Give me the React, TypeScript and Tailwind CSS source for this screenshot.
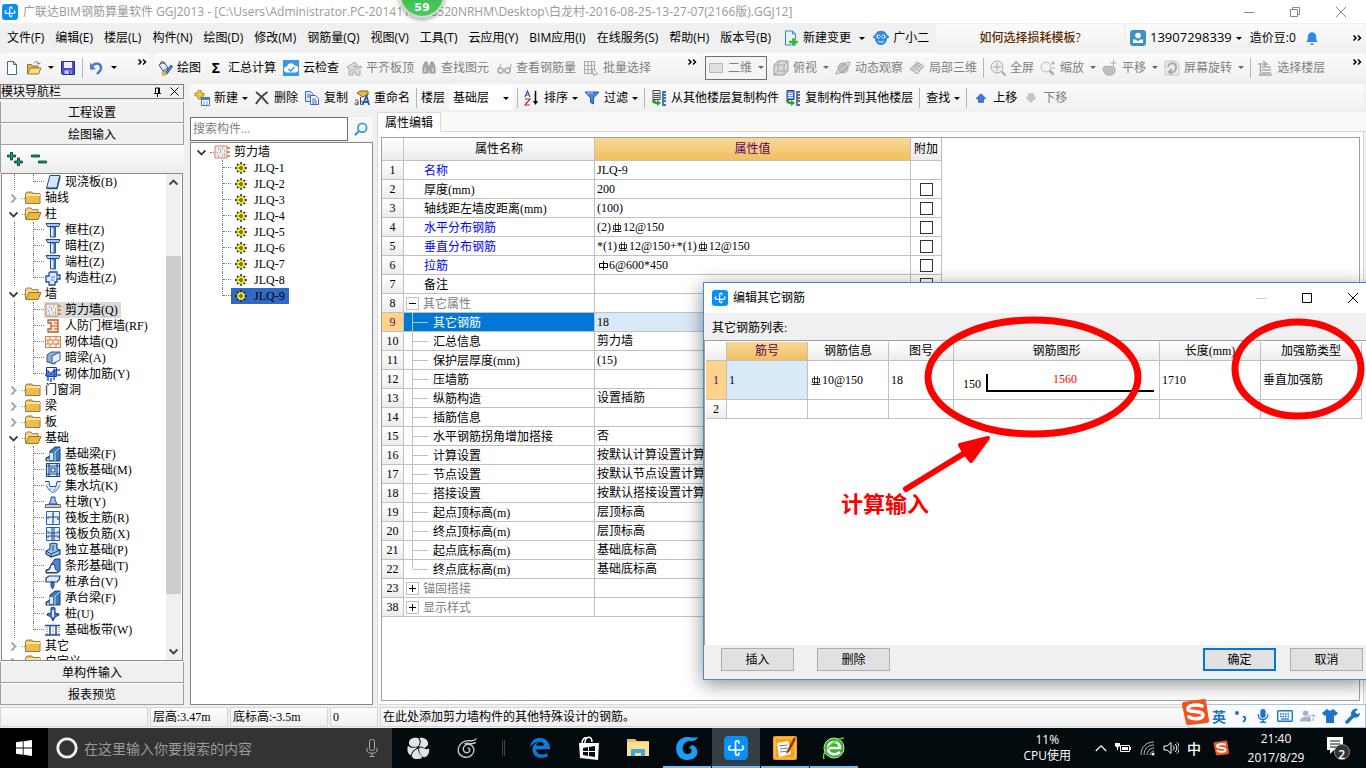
import React from "react";

type P = { children?: React.ReactNode; className?: string };

const SONG = "font-['Liberation_Serif','Noto_Sans_CJK_SC',serif]";

function Svg({ children, className = "h-4 w-4" }: P) {
  return (
    <svg viewBox="0 0 16 16" className={`shrink-0 ${className}`} fill="none" aria-hidden="true">
      {children}
    </svg>
  );
}

/* ---------- shared small pieces ---------- */

const Caret = ({ className = "text-black" }: P) => (
  <svg viewBox="0 0 6 3" className={`h-[3px] w-[6px] shrink-0 ${className}`} aria-hidden="true">
    <path d="M0 0h6L3 3z" fill="currentColor" />
  </svg>
);

const More = () => (
  <button aria-label="更多" className="flex h-3 w-[10px] shrink-0 items-center">
    <svg viewBox="0 0 9 6" className="h-[6px] w-[9px]" fill="none" stroke="#000" strokeWidth="1.500" aria-hidden="true">
      <path d="M.5.5 3 3 .5 5.500M5 .5 7.500 3 5 5.500" />
    </svg>
  </button>
);

const Sep = () => <span className="h-5 w-px shrink-0 bg-[#b4b4b4]" />;

const AppIcon = ({ className = "h-4 w-4" }: P) => (
  <svg viewBox="0 0 24 24" className={`shrink-0 ${className}`} fill="none" aria-hidden="true">
    <rect width="24" height="24" rx="4.500" fill="#0a90f5" />
    <path d="M15 7c0-3-3.500-3-3.500 0v10c0 3 3.500 3 3.500 0" stroke="#fff" strokeWidth="1.700" strokeLinecap="round" />
    <path d="M6 10c-2 1-2 4 .5 4H17c3 0 3-2.500 1.500-4" stroke="#fff" strokeWidth="1.700" strokeLinecap="round" />
  </svg>
);

/* ---------- toolbar icons ---------- */

const G = "#a9a9a9";
const GL = "#dcdcdc";
const ic = {
  page: <Svg><path d="M3.500 1.500h6l3 3v10h-9z" fill="#fff" stroke="#4a6a8c" /><path d="M9.500 1.500v3h3" stroke="#4a6a8c" /></Svg>,
  open: <Svg><path d="M1.500 14V4.500h4l1 1.500H12v2" fill="#e9b44c" stroke="#8c7440" /><path d="M1.500 14 4.500 8H15l-2.500 6z" fill="#ffdf7e" stroke="#8c7440" /><path d="M8 3c2-2 4-1.500 5 1l1.500-1M13 4l-2-.5" stroke="#6a7a8c" /></Svg>,
  save: <Svg><path d="M1.500 1.500h13v13h-12l-1-1z" fill="#4a4ed0" stroke="#2a2c90" /><path d="M4 2h8v6H4z" fill="#eef" /><path d="M4.500 10.500h7V14h-7z" fill="#c8ccf0" /><path d="M9 11h1.500v3H9z" fill="#2a2c90" /></Svg>,
  undo: <Svg><path d="M3.500 5.500c4-3.500 9-2 8.500 3-.3 3-3 4-4 5.500" stroke="#4678d8" strokeWidth="2.500" /><path d="M1 2.500v7h6z" fill="#4678d8" /></Svg>,
  bucket: <Svg><path d="m2 5 5-3 4 6-5 3z" fill="#dfe8f6" stroke="#33507c" /><path d="M4 4c-1-3 2-4 3 0" stroke="#33507c" /><path d="m8 13 6-8 1.500 1.500L10 14z" fill="#4c8ae0" stroke="#27508c" /><path d="m5 12 3-1 2 3-4 1.500z" fill="#f0b840" stroke="#a0741c" strokeWidth=".6" /></Svg>,
  cloud: <Svg><path fill="#3a96e0" d="M0 0h16v16H0z" /><path d="M4 12.500a3 3 0 0 1 0-6 4 4 0 0 1 7.500-1 3.500 3.500 0 0 1 .5 7z" fill="#fff" /><path d="m5.500 9 2 2 4-4" stroke="#3a96e0" strokeWidth="1.500" /></Svg>,
  level: <Svg><path d="m1 7 8-5 2 3-4 2 8-1v2L4 11z" fill={GL} stroke={G} /><path d="M3 11v4h4v-3h3v3h4v-5" fill={GL} stroke={G} /></Svg>,
  bino: <Svg><path d="M2 7 4 2h2l1 4h2l1-4h2l2 5v6h-5v-3H7v3H2z" fill={G} stroke="#999" /><path d="M4 8v4M12 8v4" stroke="#eee" /></Svg>,
  glasses: <Svg><circle cx="4.500" cy="10.500" r="2.500" stroke={G} strokeWidth="1.500" /><circle cx="11.500" cy="10.500" r="2.500" stroke={G} strokeWidth="1.500" /><path d="M2 10 5 4M14 10l1-6M7 10h2" stroke={G} /></Svg>,
  batch: <Svg><path d="M1.500 1.500h10v12h-10zM1.500 5.500h10M1.500 9.500h10M5 1.500v12M8.500 1.500v12" stroke={G} /><path d="m8 7 7 7-3 .5-1 1.500z" fill="#f4f4f4" stroke={G} /></Svg>,
  rect2d: <Svg><path d="M1.500 3.500h13v9h-13z" fill="#e0e0e0" stroke="#b8b8b8" /></Svg>,
  cube: <Svg><path d="m1 5 4-4h10v10l-4 4H1z" fill="#dadada" stroke="#999" /><path d="M1 5h10v10M11 5l4-4M5 1v10h10M5 11l-4 4" stroke="#aaa" /></Svg>,
  orbit: <Svg><circle cx="8" cy="8" r="5" fill="#c4c4c4" stroke={G} /><path d="M1 14c0-4 9-12 14-12 1 3-7 11-14 12z" stroke="#999" /></Svg>,
  part3d: <Svg><path d="m1 9 7-7 7 4-7 8z" fill={GL} stroke={G} /><path d="m4 6 7 5M6 4l7 4M5 11l7-7M3 10l7-7" stroke={G} /></Svg>,
  full: <Svg><circle cx="7" cy="7" r="6" fill="#eee" stroke={G} /><path d="M7 3v8M3 7h8" stroke={G} /><path d="m11.500 11.500 4 4" stroke={G} strokeWidth="2" /></Svg>,
  zoom: <Svg><circle cx="6" cy="7" r="5" fill="#f4f4f4" stroke="#b8b8b8" /><path d="m9.500 10.500 4 4" stroke={G} strokeWidth="2.500" /><path d="M11 3h4M13 1v4M12 8h3" stroke={G} /></Svg>,
  pan: <Svg><path d="M1 8c1-2 3-2 4-1 1-1 2-1 3 0 1-1 2-1 3 0 2 0 2 1 2 3s-1 5-4 5H5c-2-1-4-4-4-7z" fill="#c0c0c0" stroke={G} /><path d="M11.500 0v6M8.500 3h6" stroke={G} /></Svg>,
  rotate: <Svg><path d="M1 1h11l3 3v11H1z" fill="#ececec" stroke="#c4c4c4" /><path d="M4 7c1-5 8-5 8 0s-3 6-6 5" stroke={G} strokeWidth="2" /><path d="M8 8v7l-5-3z" fill={G} /></Svg>,
  floor: <Svg><path d="M1 4h9L6 1M10 4 7 6" stroke={G} strokeWidth="1.500" /><path d="M5 7h9M5 10h9M5 13h9M2 15h13M3.500 5v10" stroke={G} strokeWidth="1.500" /></Svg>,
  add: <Svg><path d="M4 0h3v3h3v3H7v3H4V6H1V3h3z" fill="#f2c83c" stroke="#a07a14" strokeWidth=".8" /><path d="M7.500 7.500h8v8h-8z" fill="#fff" stroke="#4474b4" /><path d="M8 8h7v2H8z" fill="#4a82d4" /><path d="M9 12h2M12 12h2M9 14h2M12 14h2" stroke="#6f9fe0" /></Svg>,
  del: <Svg><path d="M2 2c4 3 8 7 12 12M13.500 2C9 5 5 9 2 14" stroke="#444" strokeWidth="2" /></Svg>,
  copy: <Svg><path d="M1.500 1.500h5l3 3v7h-8z" fill="#dce8fa" stroke="#3c68b4" /><path d="M6.500 5.500h5l3 3v6h-8z" fill="#fff" stroke="#3c68b4" /><path d="M3 5h4M3 7h3M8 9h4M8 11h5M8 13h5" stroke="#3c68b4" /></Svg>,
  rename: <Svg><path d="m3 3 3-2h8v4l-6 2-2-2z" fill="#e8b848" stroke="#8c6418" /><path d="M1 10.500c2-1.500 3-.5 3 1v3c-4 1-4-2 0-2M6.500 7v7.500c4 0 3-4 0-3" stroke="#444" /><path d="m8.500 15 4-9 2.500 9M9.500 12h4" stroke="#2858c0" strokeWidth="1.800" /></Svg>,
  sort: <Svg><path d="M1 7 3.500 1 6 7M2 5h3" stroke="#2858b0" strokeWidth="1.200" /><path d="M1 9h5l-5 6h5" stroke="#b03030" strokeWidth="1.200" /><path d="M11.500 1v12" stroke="#000" strokeWidth="1.500" /><path d="M9 11h5l-2.500 4z" fill="#000" /></Svg>,
  filter: <Svg><path d="M1 2h14l-5.500 6v6l-3-1.500V8z" fill="#4a84e4" stroke="#2a54a8" /><path d="M3 3h6" stroke="#b8d4fa" /></Svg>,
  from: <Svg><path d="M2 .5h7v9H2z" fill="#eee" stroke="#444" /><path d="M3 3.500h5M3 5.500h5M3 7.500h5" stroke="#444" /><path d="M1 10h3l1 2h1v-2l4 3-4 3v-2c-3 0-5-1-5-4z" fill="#28a428" /><path d="M15 2h-3v13h3M12 5h3M12 8h3M12 11h3" stroke="#3c70bc" strokeWidth="1.800" /></Svg>,
  to: <Svg><path d="M2 .5h7v9H2z" fill="#6a94e0" stroke="#24407c" /><path d="M3 3.500h5M3 5.500h5M3 7.500h5" stroke="#fff" /><path d="M1 10h3l1 2h1v-2l4 3-4 3v-2c-3 0-5-1-5-4z" fill="#28a428" /><path d="M15 2h-3v13h3M12 5h3M12 8h3M12 11h3" stroke="#5c6c84" strokeWidth="1.800" /></Svg>,
  up: <Svg className="h-4 w-[10px]"><path d="M8 1 0 9h4v6h8V9h4z" fill="#3a78e0" stroke="#2450a0" /></Svg>,
  down: <Svg className="h-4 w-[10px]"><path d="m8 15 8-8h-4V1H4v6H0z" fill="#c8c8c8" stroke="#aaa" /></Svg>,
  change: <Svg><path d="M2.500 1h7l3 3v11h-10z" fill="#e4f2fc" stroke="#3a84bc" /><path d="M9.500 1v3h3" stroke="#3a84bc" /><path d="M9 8h3v2.500h3v3h-3V16H9v-2.500H6v-3h3z" fill="#34b428" stroke="#fff" strokeWidth=".4" /></Svg>,
  bird: <Svg><path d="M3 3c2-3 8-3 10 0l1 2c1 0 2 1 2 3-1 0-2 0-2 1-1 8-11 8-12 0 0-1-1-1-2-1 0-2 1-3 2-3z" fill="#2c8ce0" /><circle cx="5.500" cy="6.500" r="2" fill="#fff" /><circle cx="10.500" cy="6.500" r="2" fill="#fff" /><circle cx="5.800" cy="6.500" r=".9" fill="#124" /><circle cx="10.200" cy="6.500" r=".9" fill="#124" /><path d="M5 11c2 1.500 4 1.500 6 0" stroke="#fff" /></Svg>,
  user: <Svg><rect width="16" height="16" rx="3" fill="#3b93c8" /><circle cx="8" cy="5.500" r="2.800" fill="#fff" /><path d="M3 13V9.500h3l2 2 2-2h3V13z" fill="#fff" /></Svg>,
  bell: <Svg><path d="M2 12c2-1 1.500-3 2-6 .4-5 7.600-5 8 0 .5 3 0 5 2 6z" fill="#2a8cf0" /><path d="M6 13.500c1 2 3 2 4 0z" fill="#2a8cf0" /></Svg>,
};

function Tool({ icon, label, caret, off }: { icon?: React.ReactNode; label: string; caret?: boolean; off?: boolean }) {
  return (
    <button className={`flex h-6 shrink-0 items-center gap-1 whitespace-nowrap ${off ? "text-[#808080]" : "text-black"}`}>
      {icon}
      <span>{label}</span>
      {caret && <Caret className={off ? "ml-[2px] text-[#666]" : "text-black"} />}
    </button>
  );
}

/* ---------- module tree icons ---------- */

const B = "#1c4c9c";
const L = "#a8c8f4";
const FolderClosed = () => <Svg><path d="M.5 3.500 2 2h5l1 1.500h7v10H.5z" fill="#f0bc48" stroke="#9c7c3c" /><path d="M1 5h14" stroke="#fbe8a8" strokeWidth="2" /></Svg>;
const FolderOpen = () => <Svg><path d="M.5 13V3L2 2h4l1 1.500h6V6" fill="#f4d890" stroke="#a08448" /><path d="M1 13.500 4 6.500h12l-3 7z" fill="#f0b840" stroke="#9c7428" /></Svg>;

const treeIcons: Record<string, React.ReactNode> = {
  slab: <Svg><path d="M5 1.500h10L12 14H1.500z" fill="#d8e8fc" stroke={B} /><path d="M1.500 14.500H12l3-12" stroke={B} strokeWidth="1.500" /></Svg>,
  column: <Svg><path d="M1 1.500h14l-1.500 3h-11z" fill={L} stroke={B} /><path d="M5.500 5h5v10h-5z" fill="#e4effc" stroke={B} /><path d="M9.500 5v10" stroke="#3a70c8" strokeWidth="2" /></Svg>,
  tie: <Svg><path d="M5 2h7v3h3v4h-3v3h-2v3H4v-3H1V6h3V3z" fill="#dce9fb" stroke={B} strokeWidth="1.300" /><path d="M12 2v10M6 7h4M6 10h3" stroke="#4a7cd0" /></Svg>,
  wall: <Svg><path d="M1 2h12v12H1z" fill="#ececec" stroke="#d08860" /><path d="M4 5h1M8 4h1M10 7h1M3 9h1M6 8h1M8 11h1M4 12h1M10 12h1M6 6h1M10 10h1" stroke="#777" /><path d="M13 4h3M13 8h3M13 12h3" stroke="#d07830" strokeWidth="1.500" /></Svg>,
  door: <Svg><path d="M3 2h10v12H3v-3h3V5H3z" fill="#fbe4d0" stroke="#b85c28" strokeWidth="1.300" /><path d="M6 8h7M9 5h4M9 11h4" stroke="#b85c28" /></Svg>,
  brick: <Svg><path d="M.5 2.500h15v11H.5zM.5 6h15M.5 10h15M5 2v4M11 2v4M8 6v4M3 6v4M13 6v4M5 10v4M11 10v4" fill="#fff4ea" stroke="#d48454" strokeWidth="1.100" /></Svg>,
  beam: <Svg><path d="m2 5 4-3h9l-5 3v9l-8-2z" fill="#8cacd8" stroke="#3a5c8c" /><path d="m7 6 8-4v8l-8 4z" fill="#e4eefa" stroke="#3a5c8c" /></Svg>,
  rebar: <Svg><path d="M1.500 1.500h10v9h-10z" stroke="#1830b0" /><path d="M3 15V5l3 3 3-4v10M0 9h16M6 12v4M15 4h-5v5" stroke="#2858c0" strokeWidth="1.500" /></Svg>,
  fbeam: <Svg><path d="M1 15v-3l4-2V5l5-4h5v14z" fill="#3a78bc" stroke="#16407c" /><path d="M5 7h3v7H5zM2 13h2v1.500H2z" fill="#dceafa" /><path d="M10 15V6l5-4" stroke="#bcd8f4" /></Svg>,
  raft: <Svg><path d="M1.500 1.500h13v13h-13zM4 1v14M12 1v14M1 4h14M1 12h14M6 6h4v4H6z" fill="#dceafa" stroke="#16508c" strokeWidth="1.200" /></Svg>,
  pit: <Svg><path d="M0 4h4l1 5h6l1-5h4l-3 8-5 3-5-3z" fill="#dceafa" /><path d="M0 3.500h4l1 5h6l1-5h4" stroke={B} /><path d="m1 7 3 5 4 3 4-3 3-5M5 11h1M8 12h2M10 10h1" stroke="#4a80d0" /></Svg>,
  pier: <Svg><path d="M.5 10.500h15v3H.5z" fill="#ccc" stroke="#666" /><path d="m4 10 2-4V3h4v3l2 4z" fill={L} stroke={B} /></Svg>,
  raftMain: <Svg><path d="M1.500 1.500h13v13h-13z" fill="#eaf2fd" stroke="#2c60b8" /><path d="M9 3H8v10H7M3 9V7h10v3" stroke={B} strokeWidth="1.200" /></Svg>,
  raftNeg: <Svg><path d="M1.500 1.500h13v13h-13z" fill="#eaf2fd" stroke="#2c60b8" /><path d="M7 1v14M9 1v14M3 5v2h10V5M3 12v-2h10v2" stroke={B} strokeWidth="1.100" /></Svg>,
  iso: <Svg><path d="m1 9 4-2V2l4-1 3 1v5l3 1v4l-9 3-5-3z" fill="#9cc4ec" stroke="#16487c" strokeWidth="1.200" /><path d="m1 9 5 3 9-4M6 12v3M8 3v6" stroke="#16487c" /></Svg>,
  strip: <Svg><path d="M1 15v-3l3-1 3-6 3-4h5v12l-3 2z" fill="#4c88c8" stroke="#16407c" /><path d="M1.500 14.500v-2l3-1 2-5h3l1 5 2 1v2z" fill="#f2f8fe" stroke="#16407c" /></Svg>,
  cap: <Svg><path d="m1 4 3-2h11l-1 4-2 2H1z" fill="#dceafa" stroke="#16407c" strokeWidth="1.200" /><path d="M6 8h3v4l-1.500 3L6 12z" fill="#3a78bc" stroke="#16407c" /></Svg>,
  pile: <Svg><path d="M6 5V2l2-1 2 1v5l4 1v1l-4 2-2 4-2-4-4-2V8l4-1z" fill="#3a78c8" stroke="#16407c" /><path d="M7 4h2v7H7z" fill="#dceafa" /></Svg>,
  band: <Svg><path d="M0 3.500h15M0 13h15M5 3v10M11 3v10" stroke={B} strokeWidth="1.500" /><path d="M2 5v7M8 5v7M14 5v7" stroke="#666" strokeDasharray="1 1" /></Svg>,
};

type Node = { t: string; i?: string; open?: boolean; last?: boolean; sel?: boolean };
const nodes: Node[] = [
  { t: "现浇板(B)", i: "slab", last: true },
  { t: "轴线" },
  { t: "柱", open: true },
  { t: "框柱(Z)", i: "column" },
  { t: "暗柱(Z)", i: "column" },
  { t: "端柱(Z)", i: "column" },
  { t: "构造柱(Z)", i: "tie", last: true },
  { t: "墙", open: true },
  { t: "剪力墙(Q)", i: "wall", sel: true },
  { t: "人防门框墙(RF)", i: "door" },
  { t: "砌体墙(Q)", i: "brick" },
  { t: "暗梁(A)", i: "beam" },
  { t: "砌体加筋(Y)", i: "rebar", last: true },
  { t: "门窗洞" },
  { t: "梁" },
  { t: "板" },
  { t: "基础", open: true },
  { t: "基础梁(F)", i: "fbeam" },
  { t: "筏板基础(M)", i: "raft" },
  { t: "集水坑(K)", i: "pit" },
  { t: "柱墩(Y)", i: "pier" },
  { t: "筏板主筋(R)", i: "raftMain" },
  { t: "筏板负筋(X)", i: "raftNeg" },
  { t: "独立基础(P)", i: "iso" },
  { t: "条形基础(T)", i: "strip" },
  { t: "桩承台(V)", i: "cap" },
  { t: "承台梁(F)", i: "fbeam" },
  { t: "桩(U)", i: "pile" },
  { t: "基础板带(W)", i: "band", last: true },
  { t: "其它" },
  { t: "自定义" },
];

const Chevron = ({ open, className = "" }: { open?: boolean; className?: string }) => (
  <svg viewBox="0 0 9 9" className={`h-[9px] w-[9px] shrink-0 ${className}`} fill="none" strokeWidth="1.800" aria-hidden="true">
    {open ? <path d="M.5 2.500l4 4 4-4" stroke="#404040" /> : <path d="M2.500.5l4 4-4 4" stroke="#a0a0a0" />}
  </svg>
);

const Branch = ({ last, className = "w-[11px]" }: { last?: boolean; className?: string }) => (
  <span className={`flex h-4 shrink-0 items-start ${className}`}>
    <span className={`w-px border-l border-dotted border-[#808080] ${last ? "h-2" : "h-4"}`} />
    <span className="h-2 flex-1 border-b border-dotted border-[#808080]" />
  </span>
);

function TreeRow({ n }: { n: Node }) {
  if (n.i)
    return (
      <li className="flex h-4 items-center pl-3">
        <span className="h-4 w-[19px] shrink-0 border-l border-dotted border-[#808080]" />
        <Branch last={n.last} />
        <span className={`px-px ${n.sel ? "bg-[#d9d9d9]" : ""}`}>{treeIcons[n.i]}</span>
        <span className={`whitespace-nowrap px-[3px] ${n.sel ? "bg-[#d9d9d9]" : ""}`}>{n.t}</span>
      </li>
    );
  return (
    <li className="flex h-4 items-center pl-[7px]">
      <Chevron open={n.open} />
      <span className="ml-1 w-[3px] shrink-0 border-b border-dotted border-[#808080]" />
      {n.open ? <FolderOpen /> : <FolderClosed />}
      <span className="whitespace-nowrap pl-1">{n.t}</span>
    </li>
  );
}

const NavButton = ({ children }: P) => (
  <button className="h-[22px] w-full shrink-0 border border-[#a0a0a0] border-t-white bg-[#f0f0f0] text-center leading-[22px]">{children}</button>
);

function ModuleNav() {
  return (
    <aside className="flex w-[184px] shrink-0 flex-col">
      <div className="flex h-[15px] shrink-0 items-center border border-[#808080] leading-3">
        <span className="flex-1">模块导航栏</span>
        <button aria-label="固定" className="mr-2 flex">
          <svg viewBox="0 0 9 10" className="h-[10px] w-[9px]" fill="none" stroke="#000" aria-hidden="true"><path d="M2.500 6V1h4v5M1 6.500h7M4.500 6v4M5.500 1v5" /></svg>
        </button>
        <button aria-label="关闭" className="mr-1 flex">
          <svg viewBox="0 0 9 9" className="h-[9px] w-[9px]" stroke="#000" aria-hidden="true"><path d="m.5.5 8 8M8.500.5l-8 8" /></svg>
        </button>
      </div>
      <div className="h-[2px] shrink-0" />
      <NavButton>工程设置</NavButton>
      <NavButton>绘图输入</NavButton>
      <div className="flex h-[28px] shrink-0 items-center gap-2 border-l border-[#a0a0a0] bg-linear-to-b from-white to-[#ececec] pl-[6px]">
        <button aria-label="展开全部" className="flex">
          <svg viewBox="0 0 16 14" className="h-[14px] w-4" aria-hidden="true"><path d="M3.500 0h2v3h3v2h-3v3h-2V5H.500V3h3zM10.500 6h2v3h3v2h-3v3h-2v-3h-3V9h3z" fill="#10a080" stroke="#033" strokeWidth=".8" /></svg>
        </button>
        <button aria-label="折叠全部" className="flex">
          <svg viewBox="0 0 16 14" className="h-[14px] w-4" aria-hidden="true"><path d="M.500 3h8v2h-8zM7.500 9h8v2h-8z" fill="#10a080" stroke="#033" strokeWidth=".8" /></svg>
        </button>
      </div>
      <div className="mx-px flex min-h-0 flex-1 border border-[#828790] bg-white">
        <ul className="min-w-0 flex-1 overflow-hidden leading-4">
          {nodes.map((n, i) => <TreeRow key={i} n={n} />)}
        </ul>
        <div className="mr-px flex w-[15px] shrink-0 flex-col items-center bg-[#f0f0f0]">
          <Chevron open className="my-1 rotate-180" />
          <div className="mt-[65px] w-full flex-[330] bg-[#cdcdcd]" />
          <div className="flex-[48]" />
          <Chevron open className="my-1" />
        </div>
      </div>
      <NavButton>单构件输入</NavButton>
      <NavButton>报表预览</NavButton>
    </aside>
  );
}

/* ---------- component list ---------- */

const Gear = () => (
  <Svg className="h-3 w-3">
    <path d="M8 0v16M0 8h16M2.500 2.500l11 11M13.500 2.500l-11 11" stroke="#111" strokeWidth="1.800" />
    <circle cx="8" cy="8" r="5.500" fill="#ffee20" stroke="#554" strokeWidth=".8" />
    <circle cx="8" cy="8" r="1.800" fill="#ffee20" stroke="#222" strokeWidth="1.300" />
  </Svg>
);

function ComponentList() {
  return (
    <section className="flex w-[183px] shrink-0 flex-col">
      <div className="flex h-[30px] shrink-0 items-center pt-1">
        <input aria-label="搜索构件" placeholder="搜索构件..." className="h-6 w-[158px] border border-[#707070] bg-white px-[2px] placeholder:text-[#808080]" />
        <button aria-label="搜索" className="flex h-6 flex-1 items-center justify-center bg-[#f8f8f8]">
          <Svg className="h-[14px] w-[14px]"><circle cx="9.500" cy="6.500" r="5" stroke="#3a9ad8" strokeWidth="2" /><path d="M6 10 1 15" stroke="#3a9ad8" strokeWidth="2.500" /></Svg>
        </button>
      </div>
      <div className="min-h-0 flex-1 border border-[#828790] bg-white pt-px">
        <div className="flex h-4 items-center pl-[6px] leading-4">
          <Chevron open />
          <span className="ml-1 w-1 border-b border-dotted border-[#808080]" />
          {treeIcons.wall}
          <span className="pl-1">剪力墙</span>
        </div>
        <ul className="pl-[31px]">
          {[1, 2, 3, 4, 5, 6, 7, 8, 9].map((k) => (
            <li key={k} className="flex h-4 items-center leading-4">
              <Branch last={k === 9} className="w-[9px]" />
              <span className={`flex h-4 items-center gap-[7px] px-1 ${k === 9 ? "bg-[#316ac5]" : ""}`}>
                <Gear />
                <span>JLQ-{k}</span>
              </span>
            </li>
          ))}
        </ul>
      </div>
    </section>
  );
}

/* ---------- property table ---------- */

const Hrb = () => (
  <svg viewBox="0 0 10 9" className="mx-px inline h-[9px] w-[10px] align-[-1px]" fill="none" stroke="#000" aria-label="HRB400" role="img">
    <path d="M1.500 2.500h7v4h-7zM3.500 0v8M6.500 0v8M.5 8.500h9" strokeWidth=".8" />
  </svg>
);
const Hpb = () => (
  <svg viewBox="0 0 10 9" className="mx-px inline h-[9px] w-[10px] align-[-1px]" fill="none" stroke="#000" aria-label="HPB300" role="img">
    <path d="M1.500 2.500h8v4h-8zM5.500 0v9" />
  </svg>
);

type Row = { n: number; name: string; v?: React.ReactNode; kind?: "blue" | "group" | "child"; open?: boolean };
const rows: Row[] = [
  { n: 1, name: "名称", v: "JLQ-9", kind: "blue" },
  { n: 2, name: "厚度(mm)", v: "200" },
  { n: 3, name: "轴线距左墙皮距离(mm)", v: "(100)" },
  { n: 4, name: "水平分布钢筋", v: <>(2)<Hrb />12@150</>, kind: "blue" },
  { n: 5, name: "垂直分布钢筋", v: <>*(1)<Hrb />12@150+*(1)<Hrb />12@150</>, kind: "blue" },
  { n: 6, name: "拉筋", v: <><Hpb />6@600*450</>, kind: "blue" },
  { n: 7, name: "备注" },
  { n: 8, name: "其它属性", kind: "group", open: true },
  { n: 9, name: "其它钢筋", v: "18", kind: "child" },
  { n: 10, name: "汇总信息", v: "剪力墙", kind: "child" },
  { n: 11, name: "保护层厚度(mm)", v: "(15)", kind: "child" },
  { n: 12, name: "压墙筋", kind: "child" },
  { n: 13, name: "纵筋构造", v: "设置插筋", kind: "child" },
  { n: 14, name: "插筋信息", kind: "child" },
  { n: 15, name: "水平钢筋拐角增加搭接", v: "否", kind: "child" },
  { n: 16, name: "计算设置", v: "按默认计算设置计算", kind: "child" },
  { n: 17, name: "节点设置", v: "按默认节点设置计算", kind: "child" },
  { n: 18, name: "搭接设置", v: "按默认搭接设置计算", kind: "child" },
  { n: 19, name: "起点顶标高(m)", v: "层顶标高", kind: "child" },
  { n: 20, name: "终点顶标高(m)", v: "层顶标高", kind: "child" },
  { n: 21, name: "起点底标高(m)", v: "基础底标高", kind: "child" },
  { n: 22, name: "终点底标高(m)", v: "基础底标高", kind: "child" },
  { n: 23, name: "锚固搭接", kind: "group" },
  { n: 38, name: "显示样式", kind: "group" },
];

const CELL = "border-b border-r border-[#c0c0c0] p-0 font-normal";
const HEAD = "bg-linear-to-b from-white to-[#ececec]";
const GOLD = "bg-linear-to-b from-[#f8d898] to-[#f0c060] text-[#600060]";

function PropertyTable() {
  return (
    <table className="w-[560px] table-fixed border-separate border-spacing-0 leading-[18px]">
      <colgroup>
        <col className="w-[22px]" />
        <col className="w-[191px]" />
        <col className="w-[316px]" />
        <col className="w-[31px]" />
      </colgroup>
      <thead>
        <tr className="h-[23px]">
          <th className={`${CELL} ${HEAD}`} />
          <th className={`${CELL} ${HEAD}`}>属性名称</th>
          <th className={`${CELL} ${GOLD}`}>属性值</th>
          <th className={`${CELL} ${HEAD} whitespace-nowrap`}>附加</th>
        </tr>
      </thead>
      <tbody>
        {rows.map((r) => {
          const sel = r.n === 9;
          return (
            <tr key={r.n} className="h-[19px]">
              <th scope="row" className={`${CELL} ${sel ? "bg-[#ffd38c] text-[#600060]" : HEAD}`}>{r.n}</th>
              <td className={`${CELL} ${sel ? "bg-[#0078d7] text-white" : ""}`}>
                {r.kind === "child" ? (
                  <span className="flex h-[18px] items-center pl-2">
                    <span className="flex h-[18px] w-4 items-start">
                      <span className={`border-l border-[#c0c0c0] ${r.n === 22 ? "h-[9px]" : "h-[19px]"}`} />
                      <span className="h-[10px] flex-1 border-b border-[#c0c0c0]" />
                    </span>
                    <span className="pl-[5px] pt-px">{r.name}</span>
                  </span>
                ) : r.kind === "group" ? (
                  <span className="flex h-[18px] items-center gap-1 pl-[2px] text-[#808080]">
                    <button aria-label={r.open ? "折叠" : "展开"} className="flex h-[13px] w-[13px] items-center justify-center border border-[#c0c0c0] bg-white">
                      <svg viewBox="0 0 7 7" className="h-[7px] w-[7px]" stroke="#000" aria-hidden="true"><path d={r.open ? "M0 3.500h7" : "M0 3.500h7M3.500 0v7"} /></svg>
                    </button>
                    <span className="pt-px">{r.name}</span>
                  </span>
                ) : (
                  <span className={`flex h-[18px] items-center pl-5 pt-px ${r.kind === "blue" ? "text-[#0000ff]" : ""}`}>{r.name}</span>
                )}
              </td>
              <td className={`${CELL} whitespace-nowrap pl-[2px] ${sel ? "bg-[#d8e9f8]" : ""}`}>{r.v}</td>
              <td className={CELL}>
                {r.n > 1 && r.kind !== "group" && (
                  <input type="checkbox" aria-label={`附加 ${r.name}`} className="mx-auto block h-[13px] w-[13px] appearance-none border border-[#333] bg-white" />
                )}
              </td>
            </tr>
          );
        })}
      </tbody>
    </table>
  );
}

/* ---------- dialog ---------- */

const DlgButton = ({ children, className = "border border-[#adadad]" }: P) => (
  <button className={`h-[23px] w-[73px] bg-[#e1e1e1] text-center leading-5 ${className}`}>{children}</button>
);

function RebarDialog() {
  return (
    <div role="dialog" aria-label="编辑其它钢筋" className="absolute left-[703px] right-0 top-[282px] flex flex-col border border-r-0 border-[#3c8edc] bg-[#f0f0f0] shadow-[0_4px_18px_rgba(0,0,0,0.45)]">
      <header className="flex h-[30px] items-center bg-white pl-2 font-['Open_Sans','Noto_Sans_CJK_SC',sans-serif]">
        <AppIcon />
        <h2 className="flex-1 pl-[5px]">编辑其它钢筋</h2>
        <div className="flex items-center gap-9 pr-2">
          <button aria-label="最小化"><svg viewBox="0 0 10 10" className="h-[10px] w-[10px]" stroke="#ccc" aria-hidden="true"><path d="M0 5.500h10" /></svg></button>
          <button aria-label="最大化"><svg viewBox="0 0 10 10" className="h-[10px] w-[10px]" fill="none" stroke="#000" aria-hidden="true"><path d="M.5.5h9v9h-9z" /></svg></button>
          <button aria-label="关闭"><svg viewBox="0 0 10 10" className="h-[10px] w-[10px]" stroke="#000" aria-hidden="true"><path d="m0 0 10 10M10 0 0 10" /></svg></button>
        </div>
      </header>
      <p className="h-[27px] pl-2 leading-[30px]">其它钢筋列表:</p>
      <div className="h-[305px] border-l border-t border-[#a0a0a8] bg-white pl-px pt-px">
        <table className="w-[656px] table-fixed border-separate border-spacing-0 leading-[18px]">
          <colgroup>
            <col className="w-[21px]" />
            <col className="w-[81px]" />
            <col className="w-[81px]" />
            <col className="w-[65px]" />
            <col className="w-[206px]" />
            <col className="w-[101px]" />
            <col className="w-[101px]" />
          </colgroup>
          <thead>
            <tr className="h-[19px]">
              <th className={`${CELL} ${HEAD}`} />
              <th className={`${CELL} ${GOLD}`}>筋号</th>
              <th className={`${CELL} ${HEAD}`}>钢筋信息</th>
              <th className={`${CELL} ${HEAD}`}>图号</th>
              <th className={`${CELL} ${HEAD}`}>钢筋图形</th>
              <th className={`${CELL} ${HEAD}`}>长度(mm)</th>
              <th className={`${CELL} ${HEAD}`}>加强筋类型</th>
            </tr>
          </thead>
          <tbody>
            <tr className="h-[39px]">
              <th scope="row" className={`${CELL} bg-[#ffd38c] text-[#600060]`}>1</th>
              <td className={`${CELL} bg-[#d8e9f8] pl-[2px]`}>1</td>
              <td className={`${CELL} pl-[2px]`}><Hrb />10@150</td>
              <td className={`${CELL} pl-[2px]`}>18</td>
              <td className={CELL}>
                <div className="flex h-6 items-end pl-[9px] pr-[5px]">
                  <span className="leading-4">150</span>
                  <span className="ml-[5px] h-[18px] flex-1 border-b-2 border-l-2 border-black pr-3 text-center leading-[10px] text-[#f00]">1560</span>
                </div>
              </td>
              <td className={`${CELL} pl-[2px]`}>1710</td>
              <td className={`${CELL} pl-[2px]`}>垂直加强筋</td>
            </tr>
            <tr className="h-[19px]">
              <th scope="row" className={`${CELL} ${HEAD}`}>2</th>
              {[0, 1, 2, 3, 4, 5].map((k) => <td key={k} className={CELL} />)}
            </tr>
          </tbody>
        </table>
      </div>
      <footer className="flex h-[34px] items-start gap-[23px] pl-[17px] pr-[3px] pt-[3px]">
        <DlgButton>插入</DlgButton>
        <DlgButton>删除</DlgButton>
        <span className="flex-1" />
        <div className="flex gap-[14px]">
          <DlgButton className="border-2 border-[#0078d7]">确定</DlgButton>
          <DlgButton>取消</DlgButton>
        </div>
      </footer>
      <svg viewBox="0 0 662 240" className="pointer-events-none absolute left-0 top-0 h-[240px] w-[662px]" fill="none" stroke="#f00" strokeWidth="7" aria-hidden="true">
        <ellipse cx="329" cy="94" rx="105" ry="57" />
        <ellipse cx="594" cy="86" rx="63" ry="47" />
        <path d="m202 206 62-38" strokeWidth="6" strokeLinecap="round" />
        <path d="m284 155-28 7 4 7 7 9z" fill="#f00" strokeWidth="4" strokeLinejoin="round" />
      </svg>
      <span className="absolute left-[137px] top-[208px] text-[22px] font-bold leading-7 text-[#f00]">计算输入</span>
    </div>
  );
}

/* ---------- taskbar ---------- */

const Sogou = ({ className = "h-4 w-4" }: P) => (
  <svg viewBox="0 0 28 28" className={`shrink-0 ${className}`} fill="none" aria-hidden="true">
    <path d="M2 4 23 1q2 0 2 2l3 19q0 3-2 3L8 27q-3 0-3-2L1 7q0-3 1-3z" fill="#f4511e" />
    <path d="M21 8c-5-2-14-1-14 3 0 4 15 1 15 6 0 4-9 5-14 2" stroke="#fff" strokeWidth="3.600" strokeLinecap="round" />
  </svg>
);

const Slot = ({ children, className = "", label }: P & { label: string }) => (
  <button aria-label={label} className={`flex h-10 w-12 shrink-0 items-center justify-center ${className}`}>{children}</button>
);
const RUN = "border-b-2 border-[#76b9ed] pt-[2px]";

function ImeBar() {
  return (
    <div className="absolute bottom-10 right-0 flex h-6 items-center gap-[7px] border border-[#a8c4dc] bg-[#fafcff] pr-1 text-[#1c74c8]">
      <Sogou className="-ml-2 -mt-2 h-7 w-7" />
      <b className="-ml-1 font-['Noto_Sans_CJK_SC',sans-serif] text-[14px]">英</b>
      <Svg><circle cx="4" cy="5" r="2" fill="#1c74c8" /><path d="M10 9c3-1 3 3 0 5" stroke="#1c74c8" strokeWidth="2" /></Svg>
      <Svg className="h-4 w-[14px]"><rect x="5" y="0" width="6" height="10" rx="3" fill="#1c74c8" /><path d="M2.500 6c0 8 11 8 11 0M8 12v4M4.500 15.200h7" stroke="#1c74c8" strokeWidth="1.600" /></Svg>
      <Svg><rect x=".7" y="2.700" width="14.600" height="10.600" rx="1" stroke="#1c74c8" strokeWidth="1.400" /><path d="M3 6h10M3 8.500h10" stroke="#1c74c8" strokeWidth="1.500" strokeDasharray="1.500 1" /><path d="M4 11h8" stroke="#1c74c8" strokeWidth="1.300" /></Svg>
      <span className="flex items-end text-[#a8b4cc]">
        <Svg className="h-[14px] w-[11px]"><circle cx="8" cy="4" r="4" fill="#a8b4cc" /><path d="M0 16c0-9 16-9 16 0z" fill="#a8b4cc" /></Svg>
        <b className="-ml-1 text-[8px] leading-[8px] text-[#8c9cb8]">17</b>
      </span>
      <Svg><path d="m5 1 3 2 3-2 5 4-2.500 3L12 7v8H4V7L2.500 8 0 5z" fill="#1c74c8" /></Svg>
      <Svg><path d="M2 14 9 7" stroke="#1c74c8" strokeWidth="3.500" strokeLinecap="round" /><path d="M15 5c0 6-8 6-9 1 0-4 4-6 7-5l-3 3 2 2z" fill="#1c74c8" /></Svg>
    </div>
  );
}

function Taskbar() {
  return (
    <footer className="flex h-10 shrink-0 items-center bg-[#020a0e] font-['Open_Sans','Noto_Sans_CJK_SC',sans-serif] text-[12px] text-white">
      <Slot label="开始" className="bg-black">
        <Svg><path d="M0 2.200 6.800 1.300v6.300H0zM7.600 1.200 16 0v7.600H7.600zM0 8.400h6.800v6.300L0 13.800zM7.600 8.400H16V16l-8.400-1.200z" fill="#fff" /></Svg>
      </Slot>
      <div className="flex h-10 w-[344px] shrink-0 items-center bg-[#333] pl-2 pr-[14px]">
        <svg viewBox="0 0 22 22" className="h-[22px] w-[22px] shrink-0" aria-hidden="true"><circle cx="11" cy="11" r="9.200" fill="none" stroke="#f0f0f0" strokeWidth="2.800" /></svg>
        <input aria-label="搜索" placeholder="在这里输入你要搜索的内容" className="min-w-0 flex-1 bg-transparent pl-[6px] text-[14px] placeholder:text-[#9a9a9a]" />
        <svg viewBox="0 0 12 18" className="h-[18px] w-3" fill="none" stroke="#aaa" aria-hidden="true"><rect x="3.500" y=".5" width="5" height="11" rx="2" /><path d="M1 9v3c0 3 10 3 10 0V9M6 14.500V17M3.500 17.500h5" /></svg>
      </div>
      <div className="flex h-10 items-center gap-px pl-[2px]">
        <Slot label="浏览器">
          <svg viewBox="0 0 24 24" className="h-[23px] w-[23px]" aria-hidden="true">
            <g fill="#e4e4e4">
              <path d="M11 1C5 0 2 3 2 6c0 4 4 5 9 4 3-3 3-7 0-9z" />
              <path d="M13 1c5-1 9 2 9 6 0 3-3 3-4 5-2-3-5-2-6-2 3-3 3-6 1-9z" />
              <path d="M13 11c5 0 5 3 10 1 1 5-2 9-5 9-4 0-6-6-5-10z" />
              <path d="M12 12c-1 4 2 6 4 10-5 2-10 1-11-2 0-4 4-7 7-8z" />
              <path d="M1 9c3 3 6 2 10 2-3 2-6 4-7 8-4-2-4-7-3-10z" />
            </g>
          </svg>
        </Slot>
        <Slot label="助手">
          <Svg className="h-5 w-5"><path d="M15.500.5C13 4 10 1 6.500 2.500 0 5-1 13 5 15c5 1.500 9-2 8.500-6-.5-4-6-5.500-8-2-1.500 3 1 5.500 3.500 4.500 2-1 1.500-3.500-.5-3.500M15 3.500C12 6 9 3 6 4.500" stroke="#c8c8c8" strokeWidth="1.100" /></Svg>
        </Slot>
        <span className="mx-[10px] h-4 w-[3px] border-x border-[#444]" />
        <Slot label="Edge">
          <Svg className="h-5 w-5"><path d="M0 7C1 2 4 0 8 0c5 0 8 4 8 8v1H5c0 5 6 5 9 3v3c-5 2-12 1-12-6 0-3 2-5 5-6C4 3 2 5 0 7zm5-1h6c0-4-5-4-6 0z" fill="#0c7ad8" /></Svg>
        </Slot>
        <Slot label="应用商店">
          <svg viewBox="0 0 22 24" className="h-6 w-[22px]" fill="none" aria-hidden="true"><path d="M7 7C7 0 14-1 14 6M4 7c0-4 3-6 5-5" stroke="#fff" strokeWidth="1.500" /><path d="M1 7h20l-1 17L2 22z" fill="#fff" /><path d="m5 12 5-1v4H5zm6-1 6-1v5h-6zm-6 5h5v4l-5-1zm6 0h6v5l-6-1z" fill="#020a0e" /></svg>
        </Slot>
        <Slot label="文件资源管理器">
          <svg viewBox="0 0 22 20" className="h-5 w-[22px]" aria-hidden="true"><path d="M0 1h8l2 2h12v15H0z" fill="#e8c05c" /><path d="M0 4h22v14H0z" fill="#fbe090" /><path d="M4 18v-6q0-1 1-1h12q1 0 1 1v6h-4v-3H8v3z" fill="#3ca8e0" /></svg>
        </Slot>
        <Slot label="Glodon" className={RUN}>
          <Svg className="h-6 w-6"><path d="M15.500.5C14 4 11 3 8.500 3.500 4 5 4 12 8.500 12c3 0 3.500-4 .5-4l2.500-2c5 1.500 5 10-3.500 10C-1 16-1.500 3 6 1c3-1 7 1 9.500-.5z" fill="#1c9cf4" /></Svg>
        </Slot>
        <Slot label="广联达" className={`${RUN} bg-[#344044]`}><AppIcon className="h-6 w-6" /></Slot>
        <Slot label="便笺" className={RUN}>
          <svg viewBox="0 0 24 24" className="h-6 w-6" fill="none" aria-hidden="true"><rect width="24" height="24" rx="2" fill="#f4a01c" /><path d="M2 2h20v20H2z" stroke="#ffd060" /><path d="m4 7 11-2 3 13-12 3z" fill="#fff" /><path d="m6 10 8-1M7 13l8-1M7 16l8-1" stroke="#777" /><path d="m21 1-7 14-1 3 3-2 7-13z" fill="#8c3810" /></svg>
        </Slot>
        <Slot label="360浏览器" className={RUN}>
          <svg viewBox="0 0 24 24" className="h-6 w-6" fill="none" aria-hidden="true"><circle cx="12" cy="12" r="10" fill="#34b02c" stroke="#b8e8a8" /><path d="M6 12h12c0-8-12-8-12 0s9 7 12 4" stroke="#fff" strokeWidth="2.600" /><path d="M2 23C-1 17 12 3 22 2" stroke="#5cd038" strokeWidth="1.500" /></svg>
        </Slot>
      </div>
      <span className="flex-1" />
      <div className="mr-6 text-center leading-4">11%<br />CPU使用</div>
      <div className="flex items-center gap-2">
        <Svg className="h-3 w-3"><path d="m1 12 7-7 7 7" stroke="#fff" strokeWidth="1.600" /></Svg>
        <Svg><path d="M5.500 5.500h9v6h-9z" stroke="#fff" /><path d="M7 7h6v3H7zM15 7h1v3h-1zM0 3h5v3L3 7.500V10H2V7.500L0 6z" fill="#fff" /></Svg>
        <Svg><path d="M2 15C2 7 7 2 15 2M5 15c0-6 4-10 10-10M8 15c0-4 3-7 7-7M11 15c0-2 2-4 4-4" stroke="#bbb" /><circle cx="14" cy="14" r="1.500" fill="#fff" /></Svg>
        <Svg><path d="M1 6h3l4-3.500v11L4 10H1zM10 5.500c1.500 1.500 1.500 3.500 0 5M12 4c2.500 2.500 2.500 5.500 0 8M14 2.500c3 3 3 8 0 11" stroke="#fff" /></Svg>
        <span className="text-[14px] font-medium">中</span>
        <Sogou className="ml-1 h-4 w-4" />
      </div>
      <div className="ml-4 w-[62px] text-center leading-[19px]">21:40<br />2017/8/29</div>
      <button aria-label="通知" className="relative ml-[-10px] flex h-10 w-[69px] items-center justify-center">
        <svg viewBox="0 0 24 24" className="ml-3 h-6 w-6" fill="none" aria-hidden="true"><path d="M1 1h16v13H8l-4 4v-4H1z" fill="#fff" /><path d="M4 5h10M4 8h10M4 11h7" stroke="#111" /><circle cx="16" cy="16" r="7.500" fill="#333" stroke="#888" /></svg>
        <span className="absolute bottom-[5px] right-[21px] text-[12px] font-semibold leading-4">2</span>
      </button>
    </footer>
  );
}

/* ---------- page ---------- */

const menus = ["文件(F)", "编辑(E)", "楼层(L)", "构件(N)", "绘图(D)", "修改(M)", "钢筋量(Q)", "视图(V)", "工具(T)", "云应用(Y)", "BIM应用(I)", "在线服务(S)", "帮助(H)", "版本号(B)"];
const BAR = "flex items-center rounded bg-linear-to-b from-[#fbfbfb] to-[#f0f0f0]";
const STAT = "flex h-5 items-center border border-[#d4d4d4] bg-linear-to-b from-[#fdfdfd] to-[#f0f0f0] pl-[2px]";

export default function App() {
  return (
    <div className="relative flex h-screen flex-col overflow-hidden bg-[#f0f0f0] font-['Open_Sans','Noto_Sans_CJK_SC',sans-serif] text-[12px] text-black">
      <header className="flex h-[23px] shrink-0 items-center bg-white pl-[2px]">
        <AppIcon />
        <h1 className="flex-1 whitespace-nowrap pl-[5px] text-[#999]">广联达BIM钢筋算量软件 GGJ2013 - [C:\Users\Administrator.PC-2014110310520NRHM\Desktop\白龙村-2016-08-25-13-27-07(2166版).GGJ12]</h1>
        <div className="flex items-center gap-9 pr-5">
          <button aria-label="最小化"><svg viewBox="0 0 10 10" className="h-[10px] w-[10px]" stroke="#888" aria-hidden="true"><path d="M0 5.500h10" /></svg></button>
          <button aria-label="还原"><svg viewBox="0 0 10 10" className="h-[10px] w-[10px]" fill="none" stroke="#888" aria-hidden="true"><path d="M.5 2.500h7v7h-7zM2.500 2.500v-2h7v7h-2" /></svg></button>
          <button aria-label="关闭"><svg viewBox="0 0 10 10" className="h-[10px] w-[10px]" stroke="#888" aria-hidden="true"><path d="m0 0 10 10M10 0 0 10" /></svg></button>
        </div>
      </header>
      <div className="absolute -top-7 left-[399px] flex h-[46px] w-[46px] items-end justify-center rounded-full border-2 border-[#d4d8d4] bg-linear-to-b from-[#34b048] to-[#48cc5c] pb-px font-['DejaVu_Sans',sans-serif] text-[11px] font-bold leading-[14px] text-white shadow-[0_2px_4px_rgba(0,0,0,0.35)]">59</div>

      <nav className="flex h-[30px] shrink-0 items-center">
        <div className="flex items-center gap-[11px] pl-[7px]">
          {menus.map((m) => <button key={m} className="whitespace-nowrap">{m}</button>)}
        </div>
        <div className="flex items-center gap-2 pl-3">
          <button className="flex items-center gap-1 whitespace-nowrap">{ic.change}新建变更</button>
          <Caret />
          <button className="flex items-center gap-1 whitespace-nowrap">{ic.bird}广小二</button>
        </div>
        <div className={`${BAR} ml-[7px] h-7 min-w-0 flex-1 justify-center font-medium text-[#5c2c00]`}>
          <a href="#help" className="whitespace-nowrap">如何选择损耗模板?</a>
        </div>
        <div className={`${BAR} ml-[2px] h-7 w-[240px] shrink-0 gap-1 pl-1 pr-[3px]`}>
          {ic.user}
          <span className="text-[13px]">13907298339</span>
          <Caret />
          <span className="whitespace-nowrap pl-1">造价豆:0</span>
          <span className="pl-1">{ic.bell}</span>
          <span className="flex-1" />
          <More />
        </div>
      </nav>

      <div className="flex h-[30px] shrink-0 gap-px pb-px">
        <div className={`${BAR} w-[152px] shrink-0 gap-[6px] pl-1 pr-1`}>
          <button aria-label="新建">{ic.page}</button>
          <button aria-label="打开">{ic.open}</button>
          <Caret />
          <button aria-label="保存">{ic.save}</button>
          <Sep />
          <button aria-label="撤销">{ic.undo}</button>
          <Caret />
          <span className="flex-1" />
          <span className="mb-3"><More /></span>
        </div>
        <div className={`${BAR} w-[548px] shrink-0 gap-[7px] pl-1 pr-[3px]`}>
          <Tool icon={ic.bucket} label="绘图" />
          <Tool icon={<span className="w-4 text-center text-[14px] font-bold leading-4">Σ</span>} label="汇总计算" />
          <Tool icon={ic.cloud} label="云检查" />
          <Tool icon={ic.level} label="平齐板顶" off />
          <Tool icon={ic.bino} label="查找图元" off />
          <Tool icon={ic.glasses} label="查看钢筋量" off />
          <Tool icon={ic.batch} label="批量选择" off />
          <span className="flex-1" />
          <span className="mb-3"><More /></span>
        </div>
        <div className={`${BAR} min-w-0 flex-1 gap-[6px] pl-[3px] pr-[3px]`}>
          <span className="flex h-6 items-center border border-[#707070] bg-[#f4f4f4] px-[2px]"><Tool icon={ic.rect2d} label="二维" caret off /></span>
          <Tool icon={ic.cube} label="俯视" caret off />
          <Tool icon={ic.orbit} label="动态观察" off />
          <Tool icon={ic.part3d} label="局部三维" off />
          <Sep />
          <Tool icon={ic.full} label="全屏" off />
          <Tool icon={ic.zoom} label="缩放" caret off />
          <Tool icon={ic.pan} label="平移" caret off />
          <Tool icon={ic.rotate} label="屏幕旋转" caret off />
          <Sep />
          <Tool icon={ic.floor} label="选择楼层" off />
          <span className="flex-1" />
          <span className="mb-3"><More /></span>
        </div>
      </div>

      <main className="flex min-h-0 flex-1 gap-[6px] pt-px">
        <div className={`flex ${SONG}`}><ModuleNav /></div>
        <div className="flex min-w-0 flex-1 flex-col">
          <div className={`${BAR} mr-[2px] h-7 shrink-0 gap-[6px] pl-1`}>
            <Tool icon={ic.add} label="新建" caret />
            <Tool icon={ic.del} label="删除" />
            <Tool icon={ic.copy} label="复制" />
            <Tool icon={ic.rename} label="重命名" />
            <div className="flex items-center gap-1">
              <Sep />
              <label htmlFor="floor" className="whitespace-nowrap">楼层</label>
              <span className="relative flex items-center">
                <select id="floor" className="h-6 w-[64px] appearance-none bg-white pl-1">
                  <option>基础层</option>
                </select>
                <span className="pointer-events-none absolute right-1"><Caret /></span>
              </span>
              <Sep />
            </div>
            <Tool icon={ic.sort} label="排序" caret />
            <Tool icon={ic.filter} label="过滤" caret />
            <Sep />
            <Tool icon={ic.from} label="从其他楼层复制构件" />
            <Tool icon={ic.to} label="复制构件到其他楼层" />
            <Sep />
            <Tool label="查找" caret />
            <Sep />
            <Tool icon={<span className="flex w-4 justify-center">{ic.up}</span>} label="上移" />
            <Tool icon={<span className="flex w-4 justify-center">{ic.down}</span>} label="下移" off />
          </div>
          <div className={`flex min-h-0 flex-1 gap-1 ${SONG}`}>
            <ComponentList />
            <section className="flex min-w-0 flex-1 flex-col">
              <div className="flex h-5 shrink-0 items-stretch bg-[#f9f9f9]">
                <button className="w-16 border border-b-0 border-[#d9d9d9] bg-white leading-5">属性编辑</button>
                <span className="flex-1 border-b border-[#d9d9d9]" />
              </div>
              <div className="mr-[2px] flex min-h-0 flex-1 border border-t-0 border-[#d9d9d9] bg-white p-[3px] pt-[5px]">
                <div className="min-w-0 flex-1 overflow-hidden border border-[#a0a0a0] bg-white">
                  <PropertyTable />
                </div>
              </div>
            </section>
          </div>
        </div>
      </main>

      <div className={`flex h-[23px] shrink-0 items-center gap-[2px] pr-[2px] ${SONG}`}>
        <span className={`${STAT} w-[148px]`} />
        <span className={`${STAT} w-[78px]`}>层高:3.47m</span>
        <span className={`${STAT} w-[98px]`}>底标高:-3.5m</span>
        <span className={`${STAT} w-[48px]`}>0</span>
        <span className={`${STAT} flex-1`}>在此处添加剪力墙构件的其他特殊设计的钢筋。</span>
      </div>
      <Taskbar />
      <div className={SONG}>
        <RebarDialog />
        <ImeBar />
      </div>
    </div>
  );
}
